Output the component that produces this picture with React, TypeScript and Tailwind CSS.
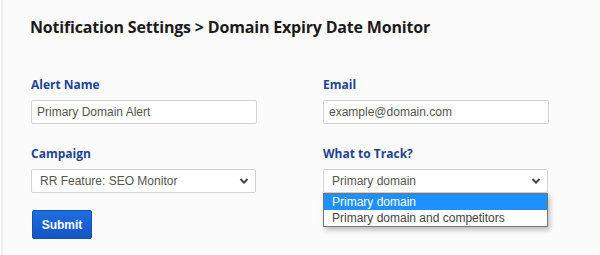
const labelCls = 'block text-[12px] font-bold text-[#1d4494] leading-[14px] mb-[8px] font-["Open_Sans",sans-serif]';
const boxCls =
    'h-[24px] bg-white border border-[#d4d4d4] rounded-[2px] flex items-center text-[12px] text-[#555] font-["Liberation_Sans",Arial,sans-serif]';

function Chevron() {
    return (
        <svg width="10" height="6" viewBox="0 0 10 6" className="shrink-0">
            <polyline points="1.5,1 5,4.6 8.5,1" fill="none" stroke="#444" strokeWidth="2" />
        </svg>
    );
}

function FakeSelect({ value }: { value: string }) {
    return (
        <div className={`${boxCls} w-[225px] justify-between pl-[8px] pr-[6px]`}>
            <span>{value}</span>
            <Chevron />
        </div>
    );
}

export default function App() {
    return (
        <div className="w-[600px] h-[255px] bg-[#fbfbfb] border-l-[2px] border-[#eeeeee] ml-[1px] overflow-hidden">
            <div className="pl-[27px] pt-[15px]">
                <h1 className='text-[16px] font-bold tracking-[-0.18px] text-[#1b1b1b] leading-[24px] font-["Open_Sans",sans-serif]'>
                    Notification Settings &gt; Domain Expiry Date Monitor
                </h1>

                <div className="grid grid-cols-[226px_226px] gap-x-[66px] mt-[39px] ml-[1px]">
                    <div>
                        <label className={labelCls}>Alert Name</label>
                        <div className={`${boxCls} w-[226px] px-[5px]`}>Primary Domain Alert</div>
                    </div>
                    <div>
                        <label className={labelCls}>Email</label>
                        <div className={`${boxCls} w-[226px] px-[5px]`}>example@domain.com</div>
                    </div>

                    <div className="mt-[23px]">
                        <label className={labelCls}>Campaign</label>
                        <FakeSelect value="RR Feature: SEO Monitor" />
                    </div>
                    <div className="mt-[23px] relative">
                        <label className={labelCls}>What to Track?</label>
                        <FakeSelect value="Primary domain" />
                        <div className='absolute left-0 top-full w-[225px] bg-white border border-[#767676] shadow-[2px_3px_5px_rgba(0,0,0,0.25)] text-[12px] text-[#444] leading-[16px] font-["Liberation_Sans",Arial,sans-serif]'>
                            <div className="bg-[#1e90ff] text-white px-[8px]">Primary domain</div>
                            <div className="px-[8px]">Primary domain and competitors</div>
                        </div>
                    </div>
                </div>

                <button
                    type="button"
                    className='mt-[17px] ml-[2px] w-[60px] h-[29px] rounded-[2px] border border-[#1250b8] bg-gradient-to-b from-[#1f6ee0] to-[#1455c4] text-white text-[12px] font-bold font-["Liberation_Sans",Arial,sans-serif]'
                >
                    Submit
                </button>
            </div>
        </div>
    );
}
